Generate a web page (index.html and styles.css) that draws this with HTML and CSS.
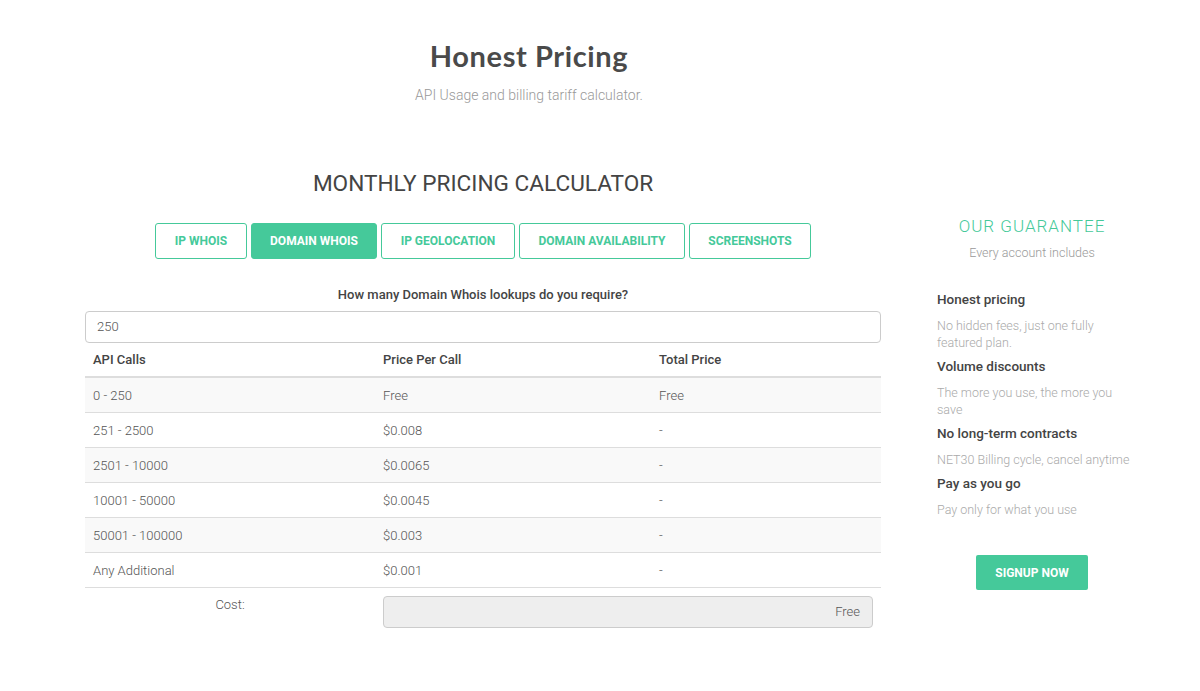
FILE: index.html
```html
<!DOCTYPE html>
<html>
<head>
<meta charset="utf-8">
<link rel="stylesheet" href="styles.css">
</head>
<body>
<header class="hero">
  <h1 class="hero-title">Honest Pricing</h1>
  <p class="hero-sub">API Usage and billing tariff calculator.</p>
</header>
<main class="main">
  <section class="calc">
    <h2 class="calc-title">MONTHLY PRICING CALCULATOR</h2>
    <div class="tabs">
      <button class="tab tab-ipwhois">IP WHOIS</button>
      <button class="tab tab-active tab-domwhois">DOMAIN WHOIS</button>
      <button class="tab tab-geo">IP GEOLOCATION</button>
      <button class="tab tab-avail">DOMAIN AVAILABILITY</button>
      <button class="tab tab-shots">SCREENSHOTS</button>
    </div>
    <label class="question">How many Domain Whois lookups do you require?</label>
    <div class="input">250</div>
    <table class="table">
      <thead>
        <tr><th class="c1">API Calls</th><th class="c2">Price Per Call</th><th class="c3">Total Price</th></tr>
      </thead>
      <tbody>
        <tr><td>0 - 250</td><td>Free</td><td>Free</td></tr>
        <tr><td>251 - 2500</td><td>$0.008</td><td>-</td></tr>
        <tr><td>2501 - 10000</td><td>$0.0065</td><td>-</td></tr>
        <tr><td>10001 - 50000</td><td>$0.0045</td><td>-</td></tr>
        <tr><td>50001 - 100000</td><td>$0.003</td><td>-</td></tr>
        <tr><td>Any Additional</td><td>$0.001</td><td>-</td></tr>
      </tbody>
    </table>
    <div class="cost">
      <div class="cost-label">Cost:</div>
      <div class="cost-box">Free</div>
    </div>
  </section>
  <aside class="guarantee">
    <h3 class="g-title">OUR GUARANTEE</h3>
    <p class="g-sub">Every account includes</p>
    <div class="g-list">
      <h4 class="g-head">Honest pricing</h4>
      <p class="g-text">No hidden fees, just one fully featured plan.</p>
      <h4 class="g-head">Volume discounts</h4>
      <p class="g-text">The more you use, the more you save</p>
      <h4 class="g-head">No long-term contracts</h4>
      <p class="g-text">NET30 Billing cycle, cancel anytime</p>
      <h4 class="g-head">Pay as you go</h4>
      <p class="g-text">Pay only for what you use</p>
    </div>
    <div class="g-btn-wrap"><button class="signup">SIGNUP NOW</button></div>
  </aside>
</main>
</body>
</html>
```
FILE: styles.css
```css
* { box-sizing: border-box; }
body {
  margin: 0;
  background: #fff;
  font-family: Roboto, "Liberation Sans", Arial, sans-serif;
  color: #555;
}
.hero {
  width: 1058px;
  text-align: center;
  padding-top: 38px;
}
.hero-title {
  margin: 0;
  font-family: Lato, "Noto Sans", sans-serif;
  font-weight: 700;
  font-size: 29px;
  line-height: 36px;
  letter-spacing: 0.6px;
  color: #4a4a4a;
}
.hero-sub {
  margin: 13px 0 0;
  font-size: 14px;
  font-weight: 300;
  line-height: 16px;
  color: #999;
}
.main {
  display: flex;
  padding-left: 85px;
  margin-top: 68px;
}
.calc {
  width: 796px;
}
.calc-title {
  margin: 0;
  text-align: center;
  font-size: 22.6px;
  font-weight: 400;
  line-height: 26px;
  color: #444;
}
.tabs {
  display: flex;
  justify-content: center;
  gap: 4px;
  margin-top: 26px;
}
.tab {
  height: 36px;
  border: 1px solid #45c99a;
  border-radius: 3px;
  background: #fff;
  color: #45c99a;
  font-family: Roboto, "Liberation Sans", sans-serif;
  font-weight: 700;
  font-size: 12px;
  padding: 0;
}
.tab-ipwhois { width: 92px; }
.tab-domwhois { width: 126px; }
.tab-geo { width: 134px; }
.tab-avail { width: 166px; }
.tab-shots { width: 122px; }
.tab-active {
  background: #45c99a;
  color: #fff;
}
.question {
  display: block;
  text-align: center;
  margin-top: 28px;
  font-size: 13px;
  font-weight: 500;
  line-height: 16px;
  color: #444;
}
.input {
  margin-top: 8px;
  height: 32px;
  border: 1px solid #ccc;
  border-radius: 4px;
  padding: 0 11px;
  line-height: 30px;
  font-size: 13px;
  font-weight: 300;
  color: #555;
}
.table {
  width: 100%;
  border-collapse: collapse;
  font-size: 13px;
}
.table th {
  text-align: left;
  font-weight: 500;
  color: #444;
  height: 34px;
  padding: 0 8px;
  border-bottom: 2px solid #ddd;
}
.table .c1 { width: 290px; }
.table .c2 { width: 276px; }
.table td {
  height: 35px;
  padding: 1px 8px 0;
  font-weight: 300;
  color: #555;
  border-bottom: 1px solid #ddd;
}
.table tbody tr:nth-child(odd) td { background: #f9f9f9; }
.cost {
  display: flex;
  align-items: flex-start;
  padding-top: 8px;
}
.cost-label {
  width: 290px;
  text-align: center;
  font-size: 13px;
  font-weight: 300;
  color: #555;
  line-height: 18px;
}
.cost-box {
  width: 490px;
  height: 32px;
  margin-left: 8px;
  background: #eee;
  border: 1px solid #ccc;
  border-radius: 4px;
  text-align: right;
  padding: 0 12px;
  line-height: 30px;
  font-size: 13px;
  font-weight: 300;
  color: #555;
}
.guarantee {
  width: 220px;
  margin-left: 41px;
  padding: 0 15px;
  margin-top: 45px;
}
.g-title {
  margin: 0;
  text-align: center;
  font-size: 17px;
  font-weight: 300;
  letter-spacing: 1px;
  line-height: 20px;
  color: #45c99a;
}
.g-sub {
  margin: 9px 0 0;
  text-align: center;
  font-size: 12.5px;
  font-weight: 300;
  line-height: 16px;
  color: #999;
}
.g-list {
  margin-top: 30px;
  margin-right: -12px;
}
.g-head {
  margin: 0;
  font-size: 13.5px;
  font-weight: 500;
  line-height: 17px;
  color: #444;
}
.g-text {
  margin: 9px 12px 7px 0;
  font-size: 12.5px;
  font-weight: 300;
  line-height: 17px;
  color: #aaa;
}
.g-text:nth-of-type(3) { margin-right: 0; }
.g-btn-wrap {
  text-align: center;
  margin-top: 37px;
}
.signup {
  width: 112px;
  height: 35px;
  background: #45c99a;
  border: none;
  border-radius: 2px;
  color: #fff;
  font-family: Roboto, "Liberation Sans", sans-serif;
  font-weight: 700;
  font-size: 12px;
  padding: 0;
}
```
